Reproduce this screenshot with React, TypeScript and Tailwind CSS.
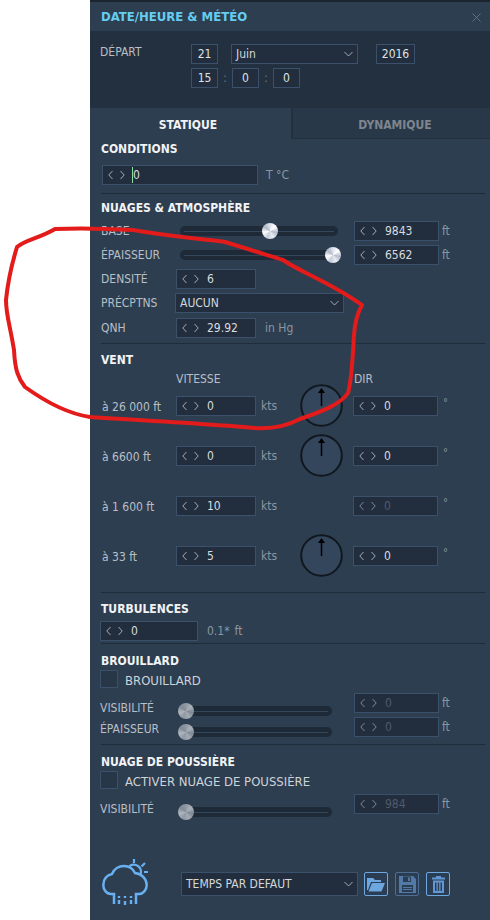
const font = "font-['DejaVu_Sans',sans-serif] font-stretch-condensed";

const Arrows = ({ dim }: { dim?: boolean }) => (
  <svg width="17" height="10" viewBox="0 0 17 10" fill="none" stroke={dim ? "#7d8a98" : "#a3adb8"} strokeWidth="1" className="shrink-0">
    <path d="M4.5 1 L0.8 5 L4.5 9" />
    <path d="M12.5 1 L16.2 5 L12.5 9" />
  </svg>
);

const Field = ({ w, value, dim, caret }: { w: string; value: string; dim?: boolean; caret?: boolean }) => (
  <div className={`${w} h-5 shrink-0 flex items-center pl-[5px] gap-2 bg-[#222e3d] border border-[#3a506b] text-xs ${dim ? "text-[#4f5b69]" : "text-[#d8dbdf]"}`}>
    <Arrows dim={dim} />
    <span className={caret ? "border-l border-[#8fe0a0] -ml-px" : ""}>{value}</span>
  </div>
);

const Box = ({ w, value }: { w: string; value: string }) => (
  <div className={`${w} h-5 flex items-center justify-center bg-[#222e3d] border border-[#3a506b] text-xs text-[#dfe2e5]`}>{value}</div>
);

const Chevron = () => (
  <svg width="9" height="6" viewBox="0 0 9 6" fill="none" stroke="#a3adb8" strokeWidth="1" className="shrink-0">
    <path d="M0.5 1 L4.5 5 L8.5 1" />
  </svg>
);

const Select = ({ w, value, h = "h-5" }: { w: string; value: string; h?: string }) => (
  <div className={`${w} ${h} shrink-0 flex items-center justify-between pl-[4px] pr-[4px] bg-[#222e3d] border border-[#3a506b] text-xs text-[#d3d7db]`}>
    <span>{value}</span>
    <Chevron />
  </div>
);

const Heading = ({ children, className }: { children: string; className: string }) => (
  <div className={`${className} flex items-center pl-[11px] text-xs font-bold text-[#f1f3f5]`}>{children}</div>
);

const Divider = ({ className }: { className: string }) => (
  <div className={`${className} h-px ml-[11px] mr-[5px] bg-[#1f2c3a]`} />
);

const Slider = ({ w, at, off }: { w: string; at: string; off?: boolean }) => (
  <div className={`${w} relative h-2.5 rounded-full bg-[#1e2a38] flex items-center px-1`}>
    <div className="h-px w-full bg-[#33465a]" />
    <div
      className={`absolute top-[-3px] size-4 rounded-full ${at} ${
        off
          ? "bg-[conic-gradient(#8f98a3,#aab1b9,#7f8894,#a3abb4,#8f98a3,#b0b6bd,#808a96,#8f98a3)]"
          : "bg-[conic-gradient(#dfe4ec,#ffffff,#b4bccb,#e8ecf2,#c6ccd8,#ffffff,#aeb6c6,#dfe4ec)]"
      }`}
    />
  </div>
);

const Unit = ({ children, className = "" }: { children: string; className?: string }) => (
  <span className={`text-xs text-[#8b96a2] ${className}`}>{children}</span>
);

const Label = ({ children, w = "w-[80px]", className = "" }: { children: string; w?: string; className?: string }) => (
  <span className={`${w} shrink-0 text-xs text-[#b9bfc6] ${className}`}>{children}</span>
);

const Dial = () => (
  <svg width="43" height="43" viewBox="0 0 43 43" className="shrink-0 -mt-[13px] -mb-[11px]">
    <circle cx="21.5" cy="21.5" r="20.3" fill="#34465c" stroke="#10171f" strokeWidth="2" />
    <path d="M21.5 5 V22" stroke="#000" strokeWidth="1.5" />
    <path d="M21.5 4 L18 9 H25 Z" fill="#000" />
  </svg>
);

const WindRow = ({ alt, speed, dir, dial, dirDim, className }: { alt: string; speed: string; dir: string; dial?: boolean; dirDim?: boolean; className: string }) => (
  <div className={`${className} h-5 flex items-center pl-[12px]`}>
    <Label w="w-[74px]" className="mt-[2px]">{alt}</Label>
    <Field w="w-[80px]" value={speed} />
    <Unit className="ml-[5px] w-[26px]">kts</Unit>
    <div className="w-[43px] ml-[13px] flex justify-center">{dial ? <Dial /> : null}</div>
    <div className="ml-[10px]"><Field w="w-[85px]" value={dir} dim={dirDim} /></div>
    <Unit className="ml-[5px] -mt-[6px] text-[11px]">°</Unit>
  </div>
);

const IconButton = ({ children, border }: { children: React.ReactNode; border: string }) => (
  <div className={`size-6 rounded-[2px] border ${border} flex items-center justify-center bg-[#2b3d52]`}>{children}</div>
);

const CloudIcon = () => (
  <svg width="46" height="46" viewBox="0 0 46 46" fill="none" stroke="#69b0f2" strokeWidth="2.5" className="shrink-0">
    <path d="M12 45 V35 H9 C4 35 1.3 30 1.3 26 C1.3 20 5 16 10 15 C12 10 17 7 22 7 C27 7 31 10 33 14 C40 15 44.7 20 44.7 26 C44.7 31 41 35 37 35 H34 V45" />
    <path d="M27 8 C29 5 33 5 36 7 C39 9 40 13 38 16" strokeWidth="2.2" />
    <path d="M32 0 V4 M43 4 L39.5 7.5 M46 13 H42" strokeWidth="2.2" />
    <path d="M17 37 V39 M23 37 V39 M29 37 V39 M17 41 V45 M23 42 V46 M29 41 V45" strokeWidth="2.4" />
  </svg>
);

export default function App() {
  return (
    <div className={`${font} relative w-[490px] h-[920px] flex bg-white overflow-hidden`}>
      <div className="w-[90px] shrink-0" />
      <div className="w-[400px] h-[920px] flex flex-col bg-[#2d3e50]">
        <div className="h-[2px] bg-[#1b2530]" />

        {/* Title */}
        <div className="h-[29px] flex items-center justify-between pl-[11px] pr-[9px] pt-[1px]">
          <span className="text-[13px] font-bold text-[#65cdf0]">DATE/HEURE &amp; MÉTÉO</span>
          <svg width="9" height="9" viewBox="0 0 9 9" stroke="#62717f" strokeWidth="1">
            <path d="M0.5 0.5 L8.5 8.5 M8.5 0.5 L0.5 8.5" />
          </svg>
        </div>

        {/* Date */}
        <div className="h-[77px] flex bg-[#223040] pl-[10px] pt-[13px]">
          <span className="w-[91px] text-xs text-[#b9bfc6]">DÉPART</span>
          <div className="flex flex-col gap-1">
            <div className="flex">
              <Box w="w-[27px]" value="21" />
              <Select w="w-[127px] ml-[13px]" value="Juin" />
              <Box w="w-[39px] ml-[18px]" value="2016" />
            </div>
            <div className="flex items-center text-xs text-[#6d7985]">
              <Box w="w-[27px]" value="15" />
              <span className="w-[14px] text-center">:</span>
              <Box w="w-[27px]" value="0" />
              <span className="w-[14px] text-center">:</span>
              <Box w="w-[27px]" value="0" />
            </div>
          </div>
        </div>

        {/* Tabs */}
        <div className="h-[31px] flex text-xs font-bold">
          <div className="w-[201px] pt-[3px] pr-[5px] flex items-center justify-center text-[#f0f2f4]">STATIQUE</div>
          <div className="flex-1 pt-[3px] pl-[7px] flex items-center justify-center bg-[#283849] border-l-2 border-b border-[#223040] text-[#7d858e]">DYNAMIQUE</div>
        </div>

        <Heading className="h-[19px]">CONDITIONS</Heading>
        <div className="mt-[7px] flex items-center pl-[12px]">
          <Field w="w-[156px]" value="0" caret />
          <Unit className="ml-[8px]">T °C</Unit>
        </div>
        <Divider className="mt-[8px]" />

        <Heading className="h-[24px] mt-[1px] pt-[2px]">NUAGES &amp; ATMOSPHÈRE</Heading>
        <div className="h-6 flex items-center pl-[11px]">
          <Label w="w-[79px]">BASE</Label>
          <Slider w="w-[158px]" at="left-[82px]" />
          <div className="ml-[16px]"><Field w="w-[85px]" value="9843" /></div>
          <Unit className="ml-[3px]">ft</Unit>
        </div>
        <div className="h-6 flex items-center pl-[11px]">
          <Label w="w-[79px]">ÉPAISSEUR</Label>
          <Slider w="w-[158px]" at="left-[145px]" />
          <div className="ml-[16px]"><Field w="w-[85px]" value="6562" /></div>
          <Unit className="ml-[3px]">ft</Unit>
        </div>
        <div className="h-6 flex items-center pl-[11px]">
          <Label w="w-[75px]">DENSITÉ</Label>
          <Field w="w-[80px]" value="6" />
        </div>
        <div className="h-6 flex items-center pl-[11px]">
          <Label w="w-[74px]">PRÉCPTNS</Label>
          <Select w="w-[169px]" value="AUCUN" />
        </div>
        <div className="h-6 mt-px flex items-center pl-[11px]">
          <Label w="w-[75px]">QNH</Label>
          <Field w="w-[80px]" value="29.92" />
          <Unit className="ml-[9px]">in Hg</Unit>
        </div>
        <Divider className="mt-[3px]" />

        <Heading className="h-[24px] mt-[4px]">VENT</Heading>
        <div className="h-[14px] flex items-center">
          <Label w="w-[264px]" className="pl-[86px]">VITESSE</Label>
          <Label>DIR</Label>
        </div>
        <WindRow className="mt-[10px]" alt="à 26 000 ft" speed="0" dir="0" dial />
        <WindRow className="mt-[30px]" alt="à 6600 ft" speed="0" dir="0" dial />
        <WindRow className="mt-[30px]" alt="à 1 600 ft" speed="10" dir="0" dirDim />
        <WindRow className="mt-[30px]" alt="à 33 ft" speed="5" dir="0" dial />
        <Divider className="mt-[26px]" />

        <Heading className="h-[24px] mt-[2px] pt-[4px]">TURBULENCES</Heading>
        <div className="mt-[2px] flex items-center pl-[10px]">
          <Field w="w-[98px]" value="0" />
          <Unit className="ml-[9px]">0.1*</Unit>
          <Unit className="ml-[5px]">ft</Unit>
        </div>
        <Divider className="mt-[2px]" />

        <Heading className="h-[22px] mt-[4px] pt-[3px]">BROUILLARD</Heading>
        <div className="h-[18px] flex items-center pl-[10px]">
          <div className="size-[18px] bg-[#273747] border border-[#3a506b]" />
          <span className="ml-[7px] pt-[4px] text-[13px] text-[#cfd3d8]">BROUILLARD</span>
        </div>
        <div className="h-5 mt-[5px] flex items-start pl-[10px]">
          <Label w="w-[78px]" className="mt-[7px]">VISIBILITÉ</Label>
          <div className="mt-[13px]"><Slider w="w-[154px]" at="left-0" off /></div>
          <div className="ml-[22px]"><Field w="w-[85px]" value="0" dim /></div>
          <Unit className="ml-[3px] mt-[2px]">ft</Unit>
        </div>
        <div className="h-5 mt-[4px] flex items-start pl-[10px]">
          <Label w="w-[78px]" className="mt-[4px]">ÉPAISSEUR</Label>
          <div className="mt-[10px]"><Slider w="w-[154px]" at="left-0" off /></div>
          <div className="ml-[22px]"><Field w="w-[85px]" value="0" dim /></div>
          <Unit className="ml-[3px] mt-[2px]">ft</Unit>
        </div>
        <Divider className="mt-[7px]" />

        <Heading className="h-[22px] mt-[4px] pt-[3px]">NUAGE DE POUSSIÈRE</Heading>
        <div className="h-[18px] flex items-center pl-[10px]">
          <div className="size-[18px] bg-[#273747] border border-[#3a506b]" />
          <span className="ml-[7px] pt-[4px] text-[13px] text-[#cfd3d8]">ACTIVER NUAGE DE POUSSIÈRE</span>
        </div>
        <div className="h-5 mt-[5px] flex items-start pl-[10px]">
          <Label w="w-[78px]" className="mt-[7px]">VISIBILITÉ</Label>
          <div className="mt-[13px]"><Slider w="w-[154px]" at="left-0" off /></div>
          <div className="ml-[22px]"><Field w="w-[85px]" value="984" dim /></div>
          <Unit className="ml-[3px] mt-[2px]">ft</Unit>
        </div>

        {/* Preset bar */}
        <div className="h-6 mt-[58px] flex items-center pl-[12px]">
          <div className="-mt-[13px] -mb-[9px]"><CloudIcon /></div>
          <div className="ml-[33px]"><Select w="w-[177px]" h="h-6" value="TEMPS PAR DEFAUT" /></div>
          <div className="ml-[6px] flex gap-[7px]">
            <IconButton border="border-[#6ea6e0]">
              <svg width="18" height="15" viewBox="0 0 18 15" fill="#6ea6e0">
                <path d="M0 1 H6 L8 3 H14 V5 H4 L1 13 H0 Z" />
                <path d="M5 6 H18 L14.5 14.5 H1.5 Z" />
              </svg>
            </IconButton>
            <IconButton border="border-[#4d6d92]">
              <svg width="17" height="17" viewBox="0 0 17 17">
                <path fillRule="evenodd" fill="#527aa6" d="M0 0 H14 L17 3 V17 H0 Z M4 0.5 V6 H12 V0.5 Z M3 9 V16 H14 V9 Z" />
                <path d="M9 1.5 H11 V5 H9 Z M4 11 H13 V12 H4 Z M4 13 H13 V14 H4 Z" fill="#527aa6" />
              </svg>
            </IconButton>
            <IconButton border="border-[#6ea6e0]">
              <svg width="13" height="17" viewBox="0 0 13 17" fill="#6198d4">
                <path d="M4 0 H9 V1.5 H13 V3.5 H0 V1.5 H4 Z" />
                <path fillRule="evenodd" d="M1 4.5 H12 V17 H1 Z M3 6.5 V15 H4.5 V6.5 Z M5.8 6.5 V15 H7.2 V6.5 Z M8.5 6.5 V15 H10 V6.5 Z" />
              </svg>
            </IconButton>
          </div>
        </div>
      </div>

      {/* Hand-drawn annotation */}
      <svg width="490" height="920" viewBox="0 0 490 920" fill="none" className="absolute inset-0 pointer-events-none">
        <path
          d="M55 229 C75 228 115 229 133 230 C170 236 200 239 225 242 C245 248 270 256 283 260 C300 272 330 282 362 305 C358 312 355 320 354 335 C353 350 352 380 348 393 C340 405 320 412 300 419 C285 427 270 429 255 428 C225 425 170 422 90 417 C70 414 50 405 25 387 C18 378 15 370 14 350 C10 325 6 315 6 300 C8 280 13 260 17 247 C25 240 40 238 55 229 Z"
          stroke="#e31b1b"
          strokeWidth="4"
          strokeLinejoin="round"
        />
      </svg>
    </div>
  );
}
